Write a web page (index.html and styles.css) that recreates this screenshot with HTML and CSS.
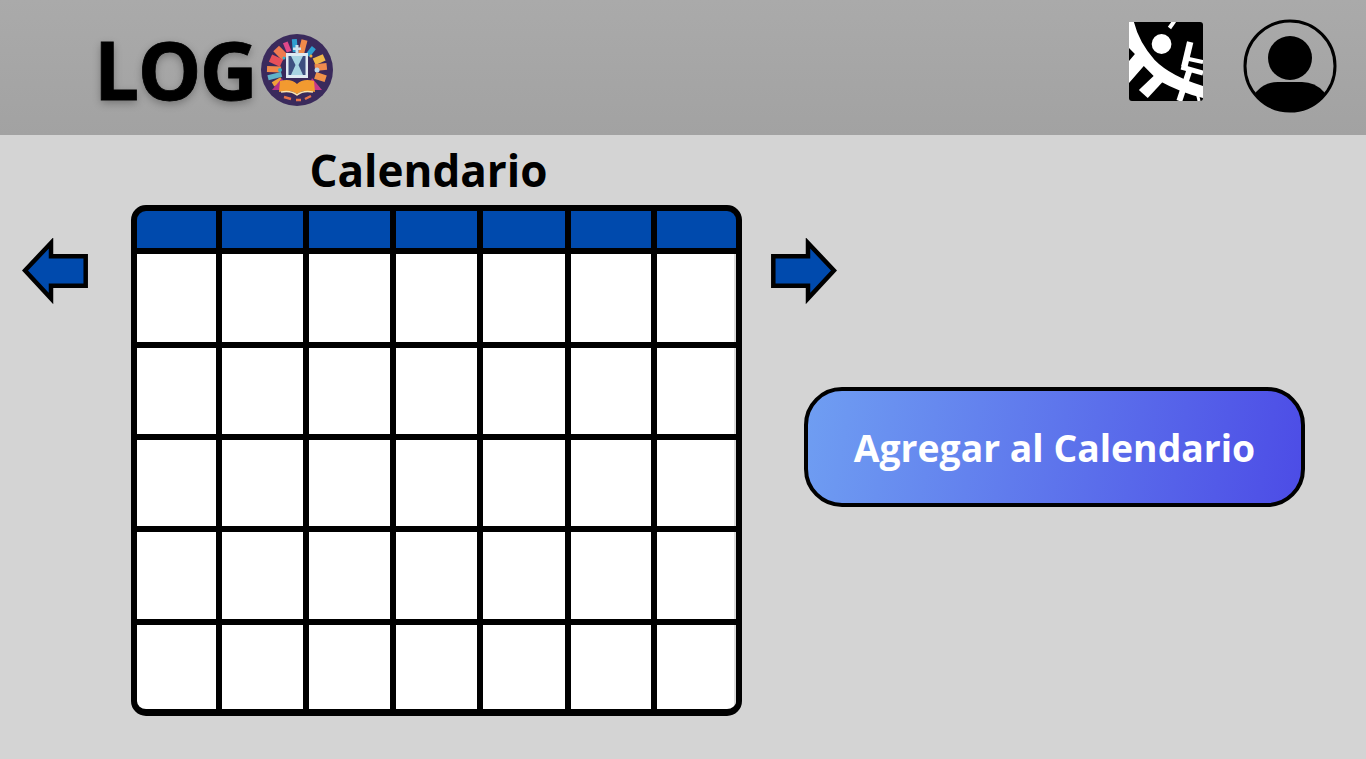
FILE: index.html
```html
<!DOCTYPE html>
<html lang="es">
<head>
    <meta charset="UTF-8">
    <meta name="viewport" content="width=device-width, initial-scale=1.0">
    <title>Calendario</title>
    <link rel="stylesheet" href="styles.css">
</head>
<body>
    <header class="topbar">
        <div class="brand">
            <span class="brand-text">LOG</span>
            <svg class="brand-badge" viewBox="0 0 72 72" aria-hidden="true">
                <circle cx="36" cy="36" r="36" fill="#3a2a5c"/>
                <!-- books around the edge -->
                <rect x="33" y="5" width="5" height="13" fill="#2f9fd0" transform="rotate(-4 36 36)"/>
                <rect x="33" y="5" width="6" height="14" fill="#f08a4a" transform="rotate(14 36 36)"/>
                <rect x="33" y="6" width="5" height="10" fill="#e0488a" transform="rotate(-22 36 36)"/>
                <rect x="32" y="6" width="8" height="13" fill="#ef7a50" transform="rotate(-44 36 36)"/>
                <rect x="32" y="7" width="8" height="12" fill="#e8505a" transform="rotate(-66 36 36)"/>
                <rect x="33" y="6" width="6" height="14" fill="#f08a4a" transform="rotate(-88 36 36)"/>
                <rect x="33" y="6" width="5" height="14" fill="#5fb4c8" transform="rotate(-104 36 36)"/>
                <rect x="33" y="8" width="5" height="10" fill="#f2a03a" transform="rotate(-120 36 36)"/>
                <rect x="33" y="8" width="5" height="10" fill="#2f9fd0" transform="rotate(38 36 36)"/>
                <rect x="32" y="6" width="7" height="11" fill="#f0b84a" transform="rotate(66 36 36)"/>
                <rect x="32" y="6" width="7" height="12" fill="#ee8a4e" transform="rotate(84 36 36)"/>
                <rect x="32" y="6" width="7" height="11" fill="#f0924a" transform="rotate(108 36 36)"/>
                <circle cx="56" cy="36" r="2.5" fill="#bcd6e6"/>
                <circle cx="19" cy="36" r="2" fill="#3ab0c8"/>
                <circle cx="23" cy="24" r="1.5" fill="#3ab0c8"/>
                <circle cx="50" cy="22" r="1.5" fill="#f2b040"/>
                <!-- bottom row -->
                <path d="M23 63 L30 65 M35 66 L40 66 M44 65 L50 62" stroke="#e8734a" stroke-width="2.5" fill="none"/>
                <!-- open book -->
                <path d="M11 56 L21 44 L25 56 Z" fill="#b8308a"/>
                <path d="M47 56 L51 44 L61 56 Z" fill="#c8388a"/>
                <path d="M19 47 Q30 44 36 50 Q42 44 53 47 L54 58 Q42 55 36 60 Q30 55 18 58 Z" fill="#f29a30"/>
                <path d="M20 58 Q30 56 36 61 Q42 56 52 58" fill="none" stroke="#fbe6b0" stroke-width="1.5"/>
                <!-- hourglass frame -->
                <rect x="25" y="19" width="22" height="25" fill="#dfeaf2"/>
                <rect x="27.5" y="22" width="17" height="19" fill="#3d4f80"/>
                <path d="M30 22 L42 22 L37.5 31 L42 41 L30 41 L34.5 31 Z" fill="#a8d4e2"/>
                <rect x="34.5" y="11" width="3" height="9" fill="#cfe2ee"/>
                <rect x="32" y="13.5" width="8" height="2.5" fill="#cfe2ee"/>
            </svg>
        </div>
        <div class="topbar-icons">
            <svg class="map-icon" viewBox="0 0 75 79" preserveAspectRatio="none" aria-hidden="true">
                <rect width="75" height="79" rx="3" fill="#000"/>
                <path d="M0 0 L5 0 Q10 20 26 38 Q42 54 75 64 L75 76 Q53 71 29 58 L15 44 L0 61 L0 39 L6 32 L0 26 Z" fill="#fff"/>
                <path d="M26 53 L10 68 L19 76 L34 60 Z" fill="#fff"/>
                <circle cx="33" cy="22" r="10" fill="#fff"/>
                <g fill="none" stroke="#fff">
                    <path d="M46 -1 L41 6" stroke-width="4"/>
                    <path d="M62 20 L56 45" stroke-width="6.5"/>
                    <path d="M56 36 L75 40" stroke-width="4"/>
                    <path d="M53 45 L75 51" stroke-width="5"/>
                    <path d="M61 49 L51 79" stroke-width="6"/>
                    <path d="M69 71 L71 79" stroke-width="3"/>
                </g>
            </svg>
            <svg class="user-icon" viewBox="0 0 94 94" aria-hidden="true">
                <defs>
                    <clipPath id="user-clip"><circle cx="47" cy="47" r="45"/></clipPath>
                </defs>
                <circle cx="47" cy="47" r="45" fill="none" stroke="#000" stroke-width="3"/>
                <circle cx="47" cy="39" r="22" fill="#000"/>
                <path d="M13 73 Q22 63 35 63 L59 63 Q72 63 81 73 L84 94 L10 94 Z" fill="#000" clip-path="url(#user-clip)"/>
            </svg>
        </div>
    </header>

    <main class="content">
        <section class="calendar-area">
            <svg class="arrow" viewBox="0 0 66 66" aria-hidden="true">
                <path d="M3 32.5 L29 5 L29 18.2 L63.7 18.2 L63.7 47.8 L29 47.8 L29 60.5 Z" fill="#004aad" stroke="#000" stroke-width="4.5"/>
            </svg>
            <div class="calendar-col">
                <h1 class="calendar-title">Calendario</h1>
                <div class="calendar" id="calendar"></div>
            </div>
            <svg class="arrow arrow-right" viewBox="0 0 66 66" aria-hidden="true">
                <path d="M3 32.5 L29 5 L29 18.2 L63.7 18.2 L63.7 47.8 L29 47.8 L29 60.5 Z" fill="#004aad" stroke="#000" stroke-width="4.5"/>
            </svg>
        </section>
        <button class="add-btn">Agregar al Calendario</button>
    </main>

    <script>
        // 7 columns, header row plus 5 weeks
        var calendar = document.getElementById("calendar");
        for (var i = 0; i < 42; i++) {
            var cell = document.createElement("div");
            cell.className = i < 7 ? "day-head" : "day";
            calendar.appendChild(cell);
        }
    </script>
</body>
</html>
```
FILE: styles.css
```css
* {
    box-sizing: border-box;
}
html, body {
    height: 100%;
}
body {
    margin: 0;
    background-color: #d4d4d4;
    font-family: "Open Sans", sans-serif;
    overflow: hidden;
}
.topbar {
    height: 135px;
    background: linear-gradient(to bottom, #aaaaaa, #a2a2a2);
    display: flex;
    align-items: center;
    justify-content: space-between;
    padding: 0 29px 0 94px;
}
.brand {
    display: flex;
    align-items: center;
}
.brand-text {
    font-size: 80px;
    font-weight: 700;
    line-height: 1;
    letter-spacing: -1.5px;
    margin-top: 3px;
    color: #000;
    -webkit-text-stroke: 0.8px #000;
    text-shadow: 0 3px 8px rgba(0, 0, 0, 0.3);
}
.brand-badge {
    width: 72px;
    height: 72px;
    margin-left: 5px;
    margin-top: 5px;
    filter: blur(0.4px);
}
.topbar-icons {
    display: flex;
    align-items: center;
    gap: 40px;
}
.map-icon {
    width: 74px;
    height: 79px;
    margin-top: -13px;
}
.user-icon {
    width: 94px;
    height: 94px;
    margin-top: -3px;
}
.content {
    display: flex;
    align-items: flex-start;
}
.calendar-area {
    display: flex;
    align-items: flex-start;
    padding-left: 22px;
}
.arrow {
    width: 66px;
    height: 66px;
    margin-top: 103px;
    flex-shrink: 0;
}
.arrow-right {
    transform: scaleX(-1);
    margin-left: 29px;
}
.calendar-col {
    margin-left: 43px;
    width: 611px;
}
.calendar-title {
    margin: 8px 0 0;
    padding-right: 16px;
    font-size: 44px;
    font-weight: 700;
    line-height: 54px;
    height: 62px;
    text-align: center;
    color: #000;
}
.calendar {
    display: grid;
    grid-template-columns: 79px 81px 81px 81px 82px 80px 79px;
    grid-template-rows: 37px 88px 86px 86px 87px 84px;
    gap: 6px;
    background-color: #000;
    border: 6px solid #000;
    border-bottom-width: 7px;
    border-radius: 15px;
    overflow: hidden;
}
.day-head {
    background-color: #004aad;
}
.day {
    background-color: #fff;
}
.day:nth-child(7n) {
    box-shadow: inset -2px 0 0 #dcdcdc;
}
.add-btn {
    width: 501px;
    height: 120px;
    margin: 252px 0 0 -33px;
    background: linear-gradient(100deg, #6f9ef2, #4c4ce6);
    border: 4px solid #000;
    border-radius: 38px;
    color: #fff;
    font-family: "Open Sans", sans-serif;
    font-size: 37.3px;
    font-weight: 700;
}
```
